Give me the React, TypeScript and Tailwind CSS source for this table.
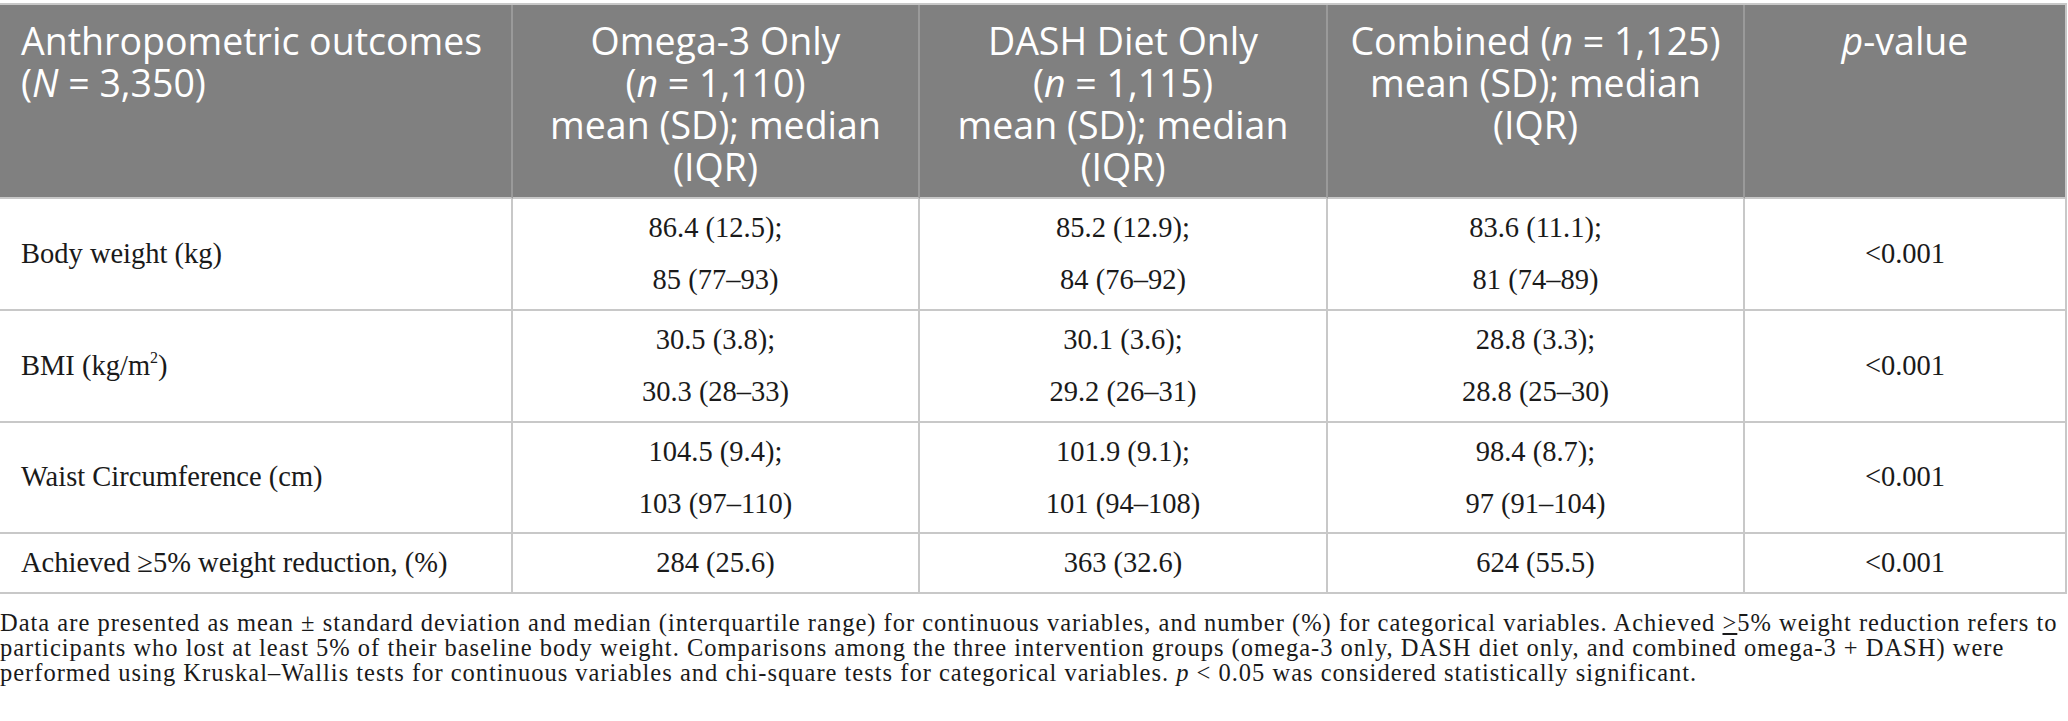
const cols = 'grid grid-cols-[513px_407px_408px_417px_322px]';

const Header = () => (
  <div className={`${cols} bg-[#808080] text-white font-['Open_Sans',sans-serif] text-[37.5px] leading-[42px]`}>
    <div className="h-[194px] border-b-2 border-r-2 border-b-[#c8c8c8] border-r-[#9a9a9a] pl-[21px] pt-[15px]">
      Anthropometric outcomes
      <br />(<i>N</i> = 3,350)
    </div>
    <div className="h-[194px] border-b-2 border-r-2 border-b-[#c8c8c8] border-r-[#9a9a9a] pt-[15px] text-center">
      Omega-3 Only
      <br />(<i>n</i> = 1,110)
      <br />mean (SD); median
      <br />(IQR)
    </div>
    <div className="h-[194px] border-b-2 border-r-2 border-b-[#c8c8c8] border-r-[#9a9a9a] pt-[15px] text-center">
      DASH Diet Only
      <br />(<i>n</i> = 1,115)
      <br />mean (SD); median
      <br />(IQR)
    </div>
    <div className="h-[194px] border-b-2 border-r-2 border-b-[#c8c8c8] border-r-[#9a9a9a] pt-[15px] text-center">
      Combined (<i>n</i> = 1,125)
      <br />mean (SD); median
      <br />(IQR)
    </div>
    <div className="h-[194px] border-b-2 border-r-2 border-b-[#c8c8c8] border-r-[#c8c8c8] pt-[15px] text-center">
      <i>p</i>-value
    </div>
  </div>
);

type Row = {
  label: React.ReactNode;
  cells: [string, string][] | string[];
  pval: string;
  h: string;
};

const rows: Row[] = [
  {
    label: 'Body weight (kg)',
    cells: [
      ['86.4 (12.5);', '85 (77–93)'],
      ['85.2 (12.9);', '84 (76–92)'],
      ['83.6 (11.1);', '81 (74–89)'],
    ],
    pval: '<0.001',
    h: 'h-[112px]',
  },
  {
    label: (
      <>
        BMI (kg/m<sup className="text-[16px]">2</sup>)
      </>
    ),
    cells: [
      ['30.5 (3.8);', '30.3 (28–33)'],
      ['30.1 (3.6);', '29.2 (26–31)'],
      ['28.8 (3.3);', '28.8 (25–30)'],
    ],
    pval: '<0.001',
    h: 'h-[112px]',
  },
  {
    label: 'Waist Circumference (cm)',
    cells: [
      ['104.5 (9.4);', '103 (97–110)'],
      ['101.9 (9.1);', '101 (94–108)'],
      ['98.4 (8.7);', '97 (91–104)'],
    ],
    pval: '<0.001',
    h: 'h-[111px]',
  },
  {
    label: 'Achieved ≥5% weight reduction, (%)',
    cells: ['284 (25.6)', '363 (32.6)', '624 (55.5)'],
    pval: '<0.001',
    h: 'h-[60px]',
  },
];

const cell = 'border-b-2 border-r-2 border-[#c8c8c8] flex items-center';

const App = () => {
  return (
    <div className="w-[2068px] h-[721px] bg-white overflow-hidden pt-[3px] font-['Liberation_Serif',serif] text-[#1a1a1a]">
      <div className="w-[2067px] border-t-2 border-[#c8c8c8]">
        <Header />
        {rows.map((r, i) => (
          <div key={i} className={`${cols} ${r.h} text-[28.5px]`}>
            <div className={`${cell} pl-[21px]`}>{r.label}</div>
            {r.cells.map((c, j) => (
              <div key={j} className={`${cell} justify-center text-center`}>
                {Array.isArray(c) ? (
                  <div className="leading-[52px]">
                    <div>{c[0]}</div>
                    <div>{c[1]}</div>
                  </div>
                ) : (
                  <div className="leading-[30px]">{c}</div>
                )}
              </div>
            ))}
            <div className={`${cell} justify-center`}>{r.pval}</div>
          </div>
        ))}
      </div>
      {/* footnote */}
      <div className="mt-[16px] text-[24.5px] leading-[25px] tracking-[1px] text-[#1a1a1a] whitespace-nowrap">
        <div>
          Data are presented as mean ± standard deviation and median (interquartile range) for continuous variables, and number (%) for categorical variables. Achieved{' '}
          <span className="underline underline-offset-2">&gt;</span>5% weight reduction refers to
        </div>
        <div>
          participants who lost at least 5% of their baseline body weight. Comparisons among the three intervention groups (omega-3 only, DASH diet only, and combined omega-3 + DASH) were
        </div>
        <div>
          performed using Kruskal–Wallis tests for continuous variables and chi-square tests for categorical variables. <i>p</i> &lt; 0.05 was considered statistically significant.
        </div>
      </div>
    </div>
  );
};

export default App;
